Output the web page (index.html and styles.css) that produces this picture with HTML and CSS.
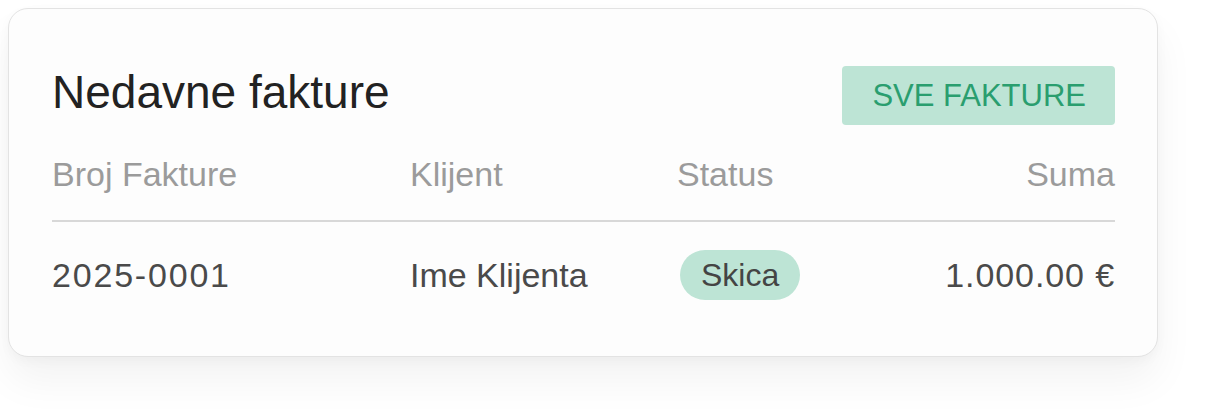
FILE: index.html
```html
<!DOCTYPE html>
<html lang="hr">
<head>
    <meta charset="UTF-8">
    <meta name="viewport" content="width=device-width, initial-scale=1.0">
    <title>Nedavne fakture</title>
    <link rel="stylesheet" href="styles.css">
</head>
<body>

    <div class="card">
        <div class="card__header">
            <h2 class="card__title">Nedavne fakture</h2>
            <a class="btn" href="#">SVE FAKTURE</a>
        </div>

        <div class="invoices">
            <div class="invoices__row invoices__row--head">
                <div class="cell">Broj Fakture</div>
                <div class="cell">Klijent</div>
                <div class="cell">Status</div>
                <div class="cell cell--right">Suma</div>
            </div>
            <div class="invoices__row">
                <div class="cell cell--id">2025-0001</div>
                <div class="cell">Ime Klijenta</div>
                <div class="cell"><span class="badge">Skica</span></div>
                <div class="cell cell--right cell--sum">1.000.00 €</div>
            </div>
        </div>
    </div>

</body>
</html>
```

FILE: styles.css
```css
body {
    margin: 0;
    padding: 8px 8px 60px;
    min-height: 100vh;
    box-sizing: border-box;
    background-color: #fff;
    font-family: 'Liberation Sans', Arial, sans-serif;
}

.card {
    width: 1150px;
    box-sizing: border-box;
    padding: 57px 42px 56px 43px;
    background-color: #fdfdfd;
    border: 1px solid #e3e3e3;
    border-radius: 20px;
    box-shadow: 0 24px 40px rgba(0, 0, 0, 0.05), 0 4px 12px rgba(0, 0, 0, 0.03);
}

.card__header {
    display: flex;
    justify-content: space-between;
    align-items: center;
}

.card__title {
    margin: -4px 0 4px;
    font-size: 46px;
    font-weight: 400;
    color: #222;
}

.btn {
    display: flex;
    align-items: center;
    height: 59px;
    padding: 0 29px 0 30px;
    box-sizing: border-box;
    background-color: #bde4d5;
    border-radius: 4px;
    color: #2a9e6f;
    font-size: 31px;
    text-decoration: none;
}

.invoices {
    margin-top: 29px;
}

.invoices__row {
    display: grid;
    grid-template-columns: 358px 267px 1fr 1fr;
    align-items: center;
    padding: 28px 0 0;
    font-size: 34px;
    line-height: 40px;
    color: #4a4a4a;
}

.invoices__row--head {
    padding: 0 0 26px;
    border-bottom: 2px solid #d8d8d8;
    color: #9b9b9b;
}

.cell--right {
    text-align: right;
}

.cell--id {
    letter-spacing: 1.8px;
}

.cell--sum {
    letter-spacing: 0.9px;
}

.badge {
    display: inline-flex;
    align-items: center;
    height: 50px;
    padding: 0 21px;
    margin-left: 3px;
    box-sizing: border-box;
    background-color: #bde4d5;
    border-radius: 25px;
    font-size: 32px;
    color: #444;
}
```
